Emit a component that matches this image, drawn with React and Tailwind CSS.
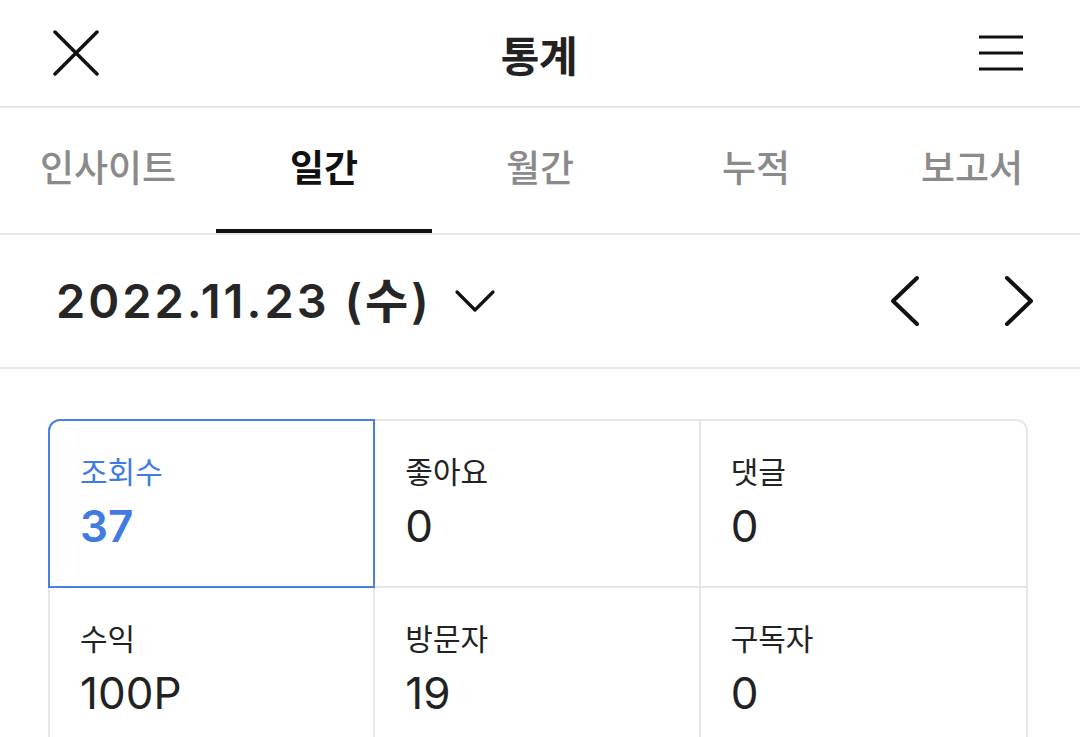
const TABS = ["인사이트", "일간", "월간", "누적", "보고서"];

const STATS = [
  { label: "조회수", value: "37", active: true },
  { label: "좋아요", value: "0" },
  { label: "댓글", value: "0" },
  { label: "수익", value: "100P" },
  { label: "방문자", value: "19" },
  { label: "구독자", value: "0" },
];

const font = { fontFamily: '"Noto Sans CJK KR", "Noto Sans", sans-serif' };
const numFont = { fontFamily: 'Inter, "Noto Sans CJK KR", sans-serif' };

function Line({ d, w, h, sw = 3.5 }) {
  return (
    <svg width={w} height={h} viewBox={`0 0 ${w} ${h}`}>
      <path d={d} fill="none" stroke="#111" strokeWidth={sw} strokeLinecap="round" strokeLinejoin="round" />
    </svg>
  );
}

export default function App() {
  return (
    <div className="w-[1080px] h-[737px] overflow-hidden bg-white text-[#222]" style={font}>
      {/* Header */}
      <div className="h-[108px] flex items-center justify-between pl-[52px] pr-[56px] border-b-2 border-[#e8e8e8]">
        <Line w={48} h={46} d="M3 2 L45 44 M45 2 L3 44" />
        <h1 className="text-[42px] font-bold text-[#222] tracking-[-0.5px]">통계</h1>
        <svg width="46" height="36" viewBox="0 0 46 36">
          <path d="M1 2h44M1 18h44M1 34h44" stroke="#111" strokeWidth="3" />
        </svg>
      </div>

      {/* Tabs */}
      <div className="flex h-[127px] border-b-2 border-[#e8e8e8]">
        {TABS.map((t, i) => (
          <div key={t} className="flex-1 relative flex items-center justify-center pb-[8px]">
            <span className={`text-[37px] ${i === 1 ? "font-bold text-[#111]" : "font-medium text-[#8a8a8a]"}`}>{t}</span>
            {i === 1 && <div className="absolute left-0 right-0 bottom-0 h-[4px] bg-[#111]" />}
          </div>
        ))}
      </div>

      {/* Date row */}
      <div className="h-[134px] flex items-center justify-between pl-[56px] pr-[44px] border-b-2 border-[#e8e8e8]">
        <div className="flex items-center gap-[22px]">
          <span className="text-[47px] font-semibold tracking-[3px] text-[#262626]" style={numFont}>
            2022.11.23 (수)
          </span>
          <Line w={42} h={24} sw={3.2} d="M3 3 L21 21 L39 3" />
        </div>
        <div className="flex items-center gap-[80px]">
          <Line w={34} h={52} d="M29 3 L5 26 L29 49" sw={4} />
          <Line w={34} h={52} d="M5 3 L29 26 L5 49" sw={4} />
        </div>
      </div>

      {/* Stats grid */}
      <div className="pl-[48px] pr-[52px] pt-[50px]">
        <div className="grid grid-cols-3 border-2 border-[#e6e6e6] rounded-[12px]">
          {STATS.map((s, i) => (
            <div
              key={s.label}
              className={`relative h-[167px] pl-[30px] pt-[29px] ${i % 3 !== 2 ? "border-r-2" : ""} ${
                i < 3 ? "border-b-2" : ""
              } border-[#e6e6e6]`}
            >
              {s.active && (
                <div className="absolute -top-[2px] -left-[2px] -right-[2px] -bottom-[2px] border-2 border-[#4a80e2] rounded-tl-[12px]" />
              )}
              <div className={`text-[30px] leading-[40px] ${s.active ? "text-[#3f7be0]" : "text-[#222]"}`}>{s.label}</div>
              <div
                className={`text-[44px] leading-[60px] mt-[6px] ${s.active ? "text-[#3f7be0] font-semibold" : "text-[#222]"}`}
                style={numFont}
              >
                {s.value}
              </div>
            </div>
          ))}
        </div>
      </div>
    </div>
  );
}
